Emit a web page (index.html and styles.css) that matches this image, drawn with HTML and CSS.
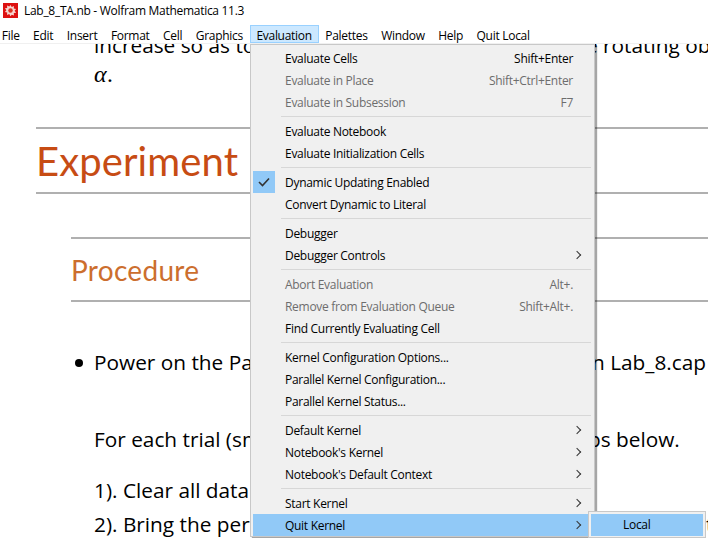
FILE: index.html
```html
<!doctype html>
<html>
<head>
    <meta charset="utf-8">
    <title>Lab_8_TA.nb - Wolfram Mathematica 11.3</title>
    <link rel="stylesheet" href="styles.css">
</head>
<body>

<div class="titlebar">
    <svg class="appicon" width="15" height="15" viewBox="0 0 16 16">
        <rect width="16" height="16" fill="#dd1111"/>
        <path d="M8 2l1.3 2.2 2.4-1-.2 2.6 2.5.5-1.6 2 1.6 2-2.5.5.2 2.6-2.4-1L8 14l-1.3-2.2-2.4 1 .2-2.6-2.5-.5 1.6-2-1.6-2 2.5-.5-.2-2.6 2.4 1z" fill="#f6d5cf"/>
        <circle cx="8" cy="8" r="2.4" fill="#dd3322"/>
    </svg>
    <span>Lab_8_TA.nb - Wolfram Mathematica 11.3</span>
</div>

<nav class="menubar">
    <span class="menubar-item">File</span>
    <span class="menubar-item">Edit</span>
    <span class="menubar-item">Insert</span>
    <span class="menubar-item">Format</span>
    <span class="menubar-item">Cell</span>
    <span class="menubar-item">Graphics</span>
    <span class="menubar-item open">Evaluation</span>
    <span class="menubar-item">Palettes</span>
    <span class="menubar-item">Window</span>
    <span class="menubar-item">Help</span>
    <span class="menubar-item">Quit Local</span>
</nav>

<main class="notebook">
    <div class="text first-line"><span class="head">increase so as to</span><span class="tail tail-rotating">e rotating ob</span></div>
    <div class="text alpha">α.</div>

    <div class="section">
        <h1>Experiment</h1>
    </div>

    <div class="subsection">
        <h2>Procedure</h2>
    </div>

    <div class="text bullet"><span class="head">Power on the Pa</span><span class="tail">n Lab_8.cap</span></div>
    <div class="text trial"><span class="head">For each trial (sm</span><span class="tail tail-below">ps below.</span></div>
    <div class="text step-one"><span class="head">1). Clear all data</span></div>
    <div class="text step-two"><span class="head">2). Bring the per</span><span class="tail tail-edge">t</span></div>
</main>

<div class="menu">
    <div class="menu-row"><span>Evaluate Cells</span><kbd>Shift+Enter</kbd></div>
    <div class="menu-row off"><span>Evaluate in Place</span><kbd>Shift+Ctrl+Enter</kbd></div>
    <div class="menu-row off"><span>Evaluate in Subsession</span><kbd>F7</kbd></div>
    <hr>
    <div class="menu-row"><span>Evaluate Notebook</span></div>
    <div class="menu-row"><span>Evaluate Initialization Cells</span></div>
    <hr>
    <div class="menu-row checked">
        <svg class="check" width="12" height="10" viewBox="0 0 12 10"><path d="M1 5l3.5 3.5L11 1.5" fill="none" stroke="#333" stroke-width="1.6"/></svg>
        <span>Dynamic Updating Enabled</span>
    </div>
    <div class="menu-row"><span>Convert Dynamic to Literal</span></div>
    <hr>
    <div class="menu-row"><span>Debugger</span></div>
    <div class="menu-row sub"><span>Debugger Controls</span></div>
    <hr>
    <div class="menu-row off"><span>Abort Evaluation</span><kbd>Alt+.</kbd></div>
    <div class="menu-row off"><span>Remove from Evaluation Queue</span><kbd>Shift+Alt+.</kbd></div>
    <div class="menu-row"><span>Find Currently Evaluating Cell</span></div>
    <hr>
    <div class="menu-row"><span>Kernel Configuration Options...</span></div>
    <div class="menu-row"><span>Parallel Kernel Configuration...</span></div>
    <div class="menu-row"><span>Parallel Kernel Status...</span></div>
    <hr>
    <div class="menu-row sub"><span>Default Kernel</span></div>
    <div class="menu-row sub"><span>Notebook's Kernel</span></div>
    <div class="menu-row sub"><span>Notebook's Default Context</span></div>
    <hr>
    <div class="menu-row sub"><span>Start Kernel</span></div>
    <div class="menu-row sub active"><span>Quit Kernel</span></div>
</div>

<div class="submenu">
    <div class="submenu-row">Local</div>
</div>

</body>
</html>
```

FILE: styles.css
```css
html, body {
    margin: 0;
    height: 538px;
    overflow: hidden;
    background: #fff;
}

body {
    position: relative;
    font-family: "Open Sans", "Noto Sans", sans-serif;
    font-size: 12px;
    letter-spacing: -0.29px;
    color: #000;
}

.titlebar {
    height: 20px;
    padding: 0 0 5px 3px;
    display: flex;
    align-items: center;
    gap: 6px;
}

.appicon {
    flex: none;
}

.menubar {
    height: 18px;
    display: flex;
    margin-left: -5px;
    border-bottom: 1px solid #f0f0f0;
}

.menubar-item {
    padding: 0 6.75px;
    line-height: 21px;
}

.menubar-item.open {
    background: #cce8ff;
    box-shadow: inset 0 0 0 1px #99d1ff;
}

.notebook {
    height: 494px;
    overflow: hidden;
}

.text {
    font-size: 20.8px;
    letter-spacing: 0;
    line-height: 28px;
    margin-left: 94px;
    white-space: nowrap;
    display: flex;
}

.head {
    width: 156px;
    flex: none;
}

.tail {
    margin-left: 342px;
    flex: none;
}

.tail-rotating {
    margin-left: 336px;
}

.tail-below {
    margin-left: 338px;
}

.tail-edge {
    margin-left: 456px;
}

.first-line {
    margin-top: -13px;
}

.alpha {
    margin-top: 1px;
    font-family: "Liberation Serif", serif;
    font-style: italic;
    font-size: 24px;
    letter-spacing: 1px;
}

.section {
    margin: 39px 0 0 36px;
    height: 63px;
    border-top: 2px solid #b0b0b0;
    border-bottom: 2px solid #b0b0b0;
}

h1 {
    margin: 0;
    font-family: Lato, sans-serif;
    font-weight: 400;
    font-size: 40px;
    letter-spacing: 0.1px;
    line-height: 64px;
    color: #c74c14;
}

.subsection {
    margin: 43px 0 0 71px;
    height: 61px;
    border-top: 2px solid #b0b0b0;
    border-bottom: 2px solid #b0b0b0;
}

h2 {
    margin: 0;
    font-family: Lato, sans-serif;
    font-weight: 400;
    font-size: 28px;
    letter-spacing: 0.3px;
    line-height: 62px;
    color: #cc6e2e;
}

.bullet {
    position: relative;
    margin-top: 46px;
}

.bullet::before {
    content: "";
    position: absolute;
    left: -19px;
    top: 11px;
    width: 8px;
    height: 8px;
    border-radius: 50%;
    background: #000;
}

.trial {
    margin-top: 49px;
}

.step-one {
    margin-top: 23px;
}

.step-two {
    margin-top: 6px;
}

/* open Evaluation menu */
.menu {
    position: absolute;
    left: 250px;
    top: 44px;
    width: 345px;
    height: 493px;
    box-sizing: border-box;
    padding: 2px 2px;
    background: #f0f0f0;
    border: 1px solid #c8c8c8;
    box-shadow: 2px 2px 1px rgba(0, 0, 0, 0.35);
}

.menu-row {
    position: relative;
    height: 22px;
    line-height: 23px;
    padding: 0 19px 0 32px;
    display: flex;
    justify-content: space-between;
    white-space: nowrap;
}

.menu-row kbd {
    font: inherit;
}

.menu-row.off {
    color: #6d6d6d;
}

.menu-row.active {
    background: #91c9f7;
}

.menu-row.sub::after {
    content: "";
    position: absolute;
    right: 12px;
    top: 8px;
    width: 5px;
    height: 5px;
    border-top: 1px solid #333;
    border-right: 1px solid #333;
    transform: rotate(45deg);
}

.menu-row.checked::before {
    content: "";
    position: absolute;
    left: 0;
    top: 0;
    width: 22px;
    height: 22px;
    background: #91c9f7;
}

.check {
    position: absolute;
    left: 5px;
    top: 6px;
    z-index: 1;
}

.menu hr {
    margin: 3px 1px 3px 28px;
    height: 1px;
    border: 0;
    background: #d7d7d7;
}

.submenu {
    position: absolute;
    left: 588px;
    top: 511px;
    width: 118px;
    height: 27px;
    box-sizing: border-box;
    padding: 2px;
    background: #f0f0f0;
    border: 1px solid #c8c8c8;
}

.submenu-row {
    height: 22px;
    line-height: 22px;
    background: #91c9f7;
    padding-left: 32px;
}
```
